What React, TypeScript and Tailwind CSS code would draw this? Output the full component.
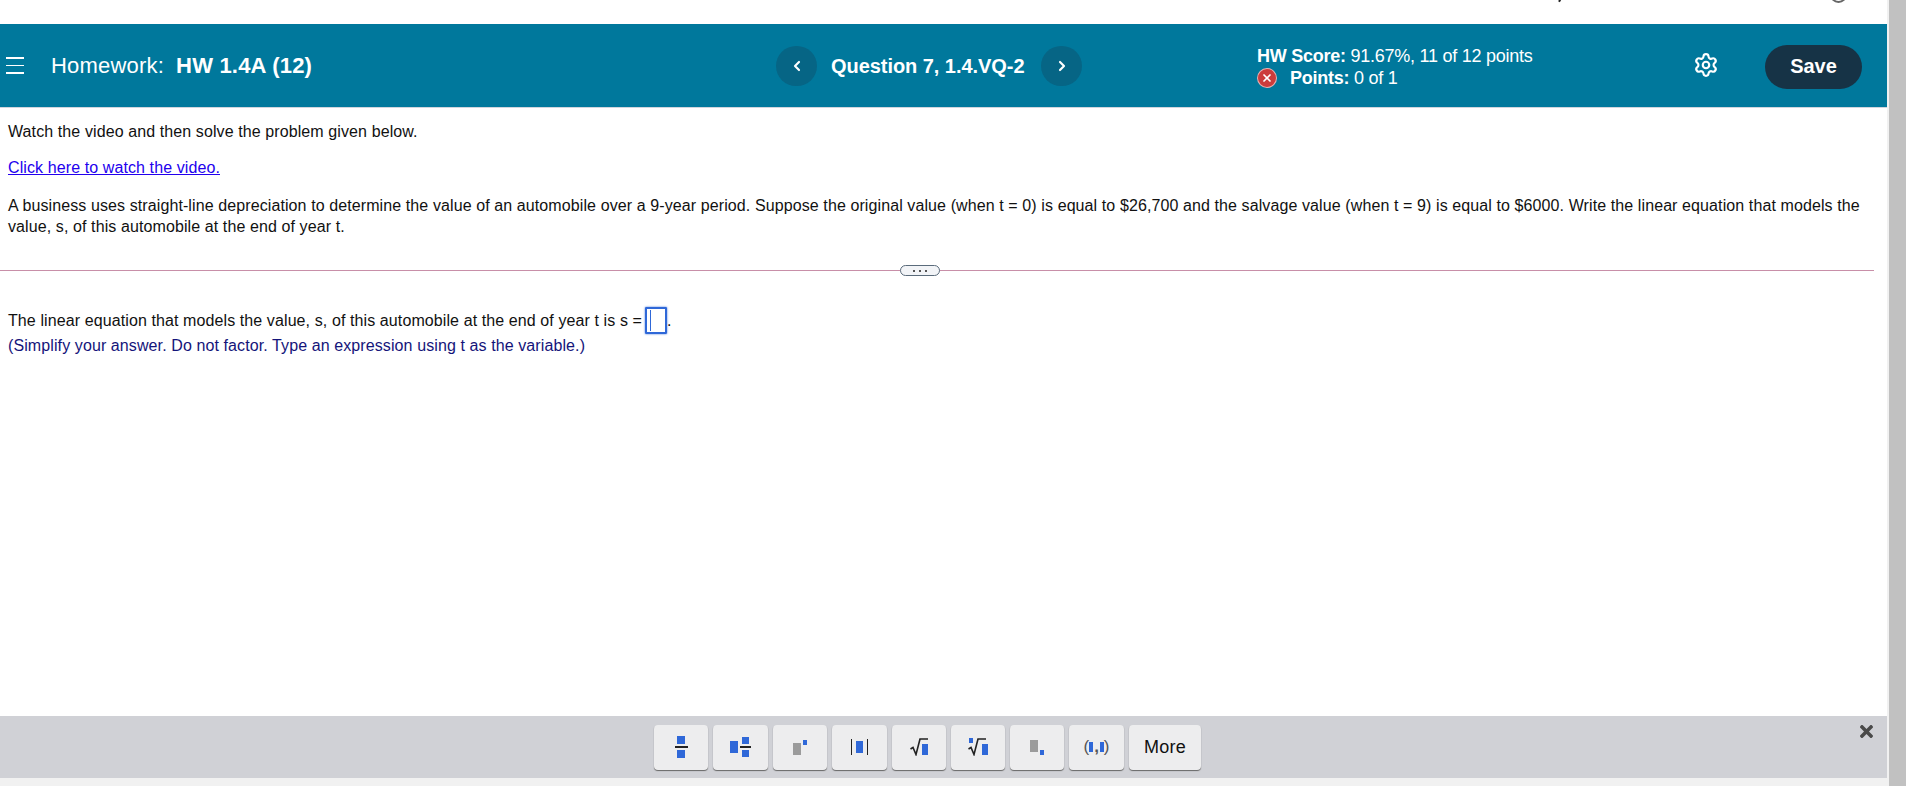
import { ChevronLeft, ChevronRight, Settings, X } from 'lucide-react'
import { FaTimes } from 'react-icons/fa'

const FONT = "font-['Liberation_Sans',Arial,sans-serif]"

const Blue = ({ className }: { className: string }) => (
  <span className={`block bg-[#2f68d8] ${className}`} />
)

const Gray = ({ className }: { className: string }) => (
  <span className={`block bg-[#9b9b9b] ${className}`} />
)

const Bar = ({ className }: { className: string }) => (
  <span className={`block bg-[#222] ${className}`} />
)

const Radical = () => (
  <svg width="18" height="18" viewBox="0 0 18 18" fill="none" stroke="#222" strokeWidth="1.6">
    <path d="M0.5 11 L3 9.5 L6 16.5 L10 1 L18 1" />
  </svg>
)

const ToolButton = ({ width, children }: { width: string; children: React.ReactNode }) => (
  <button
    className={`flex h-[45px] ${width} items-center justify-center rounded-[4px] bg-[#ededee] shadow-[0_1px_1px_#666]`}
  >
    {children}
  </button>
)

export default function App() {
  return (
    <div className={`relative h-[786px] w-[1908px] overflow-hidden bg-white ${FONT}`}>
      {/* bits of the browser chrome cut off by the top edge */}
      <span className="absolute left-[1559px] top-[-2px] h-[4px] w-[2px] rotate-[30deg] bg-[#222]" />
      <span className="absolute left-[1830px] top-[-14px] h-[17px] w-[17px] rounded-full border-2 border-[#666]" />

      <div className="flex h-full w-full">
        <div className="flex w-[1887px] flex-col">
          <div className="h-6 shrink-0" />

          <header className="flex h-[83px] shrink-0 items-center bg-[#00789c] text-white shadow-[0_1px_0_#d0d5dd]">
            <div className="flex w-[776px] items-center">
              <div className="ml-[6px] flex w-[18px] flex-col gap-[6px]">
                <span className="h-[1.5px] bg-white" />
                <span className="h-[1.5px] bg-white" />
                <span className="h-[1.5px] bg-white" />
              </div>
              <span className="ml-[27px] text-[22px] tracking-[0.2px]">Homework:</span>
              <span className="ml-[12px] text-[22px] font-bold tracking-[0.2px]">HW 1.4A (12)</span>
            </div>

            <div className="flex w-[481px] items-center">
              <button className="flex h-[40px] w-[41px] items-center justify-center rounded-full bg-[#066585]">
                <ChevronLeft size={16} strokeWidth={3.2} />
              </button>
              <span className="ml-[14px] w-[195px] whitespace-nowrap text-[20px] font-bold tracking-[-0.05px]">
                Question 7, 1.4.VQ-2
              </span>
              <button className="ml-[15px] flex h-[40px] w-[41px] items-center justify-center rounded-full bg-[#066585]">
                <ChevronRight size={16} strokeWidth={3.2} />
              </button>
            </div>

            <div className="mt-[2px] flex w-[436px] flex-col text-[18px] leading-[22px] tracking-[-0.25px]">
              <div>
                <b>HW Score:</b> 91.67%, 11 of 12 points
              </div>
              <div className="flex items-center">
                <span className="flex h-5 w-5 items-center justify-center rounded-full border border-white/60 bg-[#cc3c3c]">
                  <X size={12} strokeWidth={3.5} />
                </span>
                <span className="ml-[13px]">
                  <b>Points:</b> 0 of 1
                </span>
              </div>
            </div>

            <Settings size={26} strokeWidth={2} className="mb-[2px]" />

            <button className="ml-[46px] mt-[3px] flex h-[44px] w-[97px] items-center justify-center rounded-full bg-[#163346] pb-[2px] text-[20px] font-bold">
              Save
            </button>
          </header>

          <main className="flex-1 pt-[14px] text-[16px] tracking-[0.1px] text-[#111]">
            <p className="ml-2 leading-[22px]">Watch the video and then solve the problem given below.</p>
            <a href="#" className="ml-2 mt-[14px] block leading-[22px] text-[#2200ee] underline">
              Click here to watch the video.
            </a>
            <p className="ml-2 mr-2 mt-[16px] leading-[21px]">
              A business uses straight-line depreciation to determine the value of an automobile over a 9-year period.
              Suppose the original value (when t = 0) is equal to $26,700 and the salvage value (when t = 9) is equal to
              $6000. Write the linear equation that models the value, s, of this automobile at the end of year t.
            </p>

            <div className="relative mt-[33px] h-px w-[1874px] bg-[#c88fa8]">
              <span className="absolute left-[900px] top-[-5px] flex h-[11px] w-[40px] items-center justify-center gap-[4px] rounded-full border border-[#5a6b7b] bg-[#f2f4f7]">
                <span className="h-[2px] w-[2px] bg-[#555]" />
                <span className="h-[2px] w-[2px] bg-[#555]" />
                <span className="h-[2px] w-[2px] bg-[#555]" />
              </span>
            </div>

            <div className="ml-2 mt-[36px] flex h-[27px] items-center">
              <span>The linear equation that models the value, s, of this automobile at the end of year t is s =</span>
              <span className="ml-[3px] flex h-[27px] w-[22px] items-center rounded-[1px] border-2 border-[#2f68d8] pl-[3px] shadow-[0_0_2px_#2f68d8]">
                <span className="h-[21px] w-px bg-[#2f68d8]" />
              </span>
              <span>.</span>
            </div>
            <p className="ml-2 leading-[24px] text-[#14147a]">
              (Simplify your answer. Do not factor. Type an expression using t as the variable.)
            </p>
          </main>

          <div className="relative flex h-[62px] shrink-0 items-center bg-[#d0d1d6] pl-[654px]">
            <div className="flex gap-[5px]">
              <ToolButton width="w-[54px]">
                <span className="flex flex-col items-center gap-[2px]">
                  <Blue className="h-[8px] w-[8px]" />
                  <Bar className="h-[1.5px] w-[13px]" />
                  <Blue className="h-[8px] w-[8px]" />
                </span>
              </ToolButton>
              <ToolButton width="w-[55px]">
                <span className="flex items-center gap-[2px]">
                  <Blue className="h-[12px] w-[8px]" />
                  <span className="flex flex-col items-center gap-[2px]">
                    <Blue className="h-[7px] w-[7px]" />
                    <Bar className="h-[1.5px] w-[11px]" />
                    <Blue className="h-[7px] w-[7px]" />
                  </span>
                </span>
              </ToolButton>
              <ToolButton width="w-[54px]">
                <span className="flex items-start gap-[2px]">
                  <Gray className="mt-[3px] h-[12px] w-[8px]" />
                  <Blue className="h-[5px] w-[4px]" />
                </span>
              </ToolButton>
              <ToolButton width="w-[55px]">
                <span className="flex items-center gap-[4px]">
                  <Bar className="h-[16px] w-[1px]" />
                  <Blue className="h-[12px] w-[7px]" />
                  <Bar className="h-[16px] w-[1px]" />
                </span>
              </ToolButton>
              <ToolButton width="w-[54px]">
                <span className="flex items-end">
                  <Radical />
                  <Blue className="mb-[1px] ml-[-6px] h-[11px] w-[6px]" />
                </span>
              </ToolButton>
              <ToolButton width="w-[54px]">
                <span className="relative flex items-end">
                  <Blue className="absolute left-[1px] top-[0px] h-[5px] w-[4px]" />
                  <Radical />
                  <Blue className="mb-[1px] ml-[-4px] h-[11px] w-[6px]" />
                </span>
              </ToolButton>
              <ToolButton width="w-[54px]">
                <span className="flex items-end gap-[2px]">
                  <Gray className="mb-[3px] h-[12px] w-[8px]" />
                  <Blue className="h-[5px] w-[4px]" />
                </span>
              </ToolButton>
              <ToolButton width="w-[55px]">
                <span className="flex items-center text-[17px] text-[#555]">
                  (<Blue className="h-[10px] w-[4px]" />
                  <span className="mx-[1px] font-bold">,</span>
                  <Blue className="h-[10px] w-[4px]" />)
                </span>
              </ToolButton>
              <ToolButton width="w-[72px]">
                <span className="text-[18px] tracking-[0.2px] text-[#111]">More</span>
              </ToolButton>
            </div>
            <FaTimes size={19} className="absolute right-[11px] top-[6px] text-[#4a4a4a]" />
          </div>

          <div className="h-2 shrink-0 bg-[#f1f1f1]" />
        </div>

        <div className="w-[2px] bg-[#f1f1f1]" />
        <div className="w-[17px] bg-[#c1c1c1]" />
      </div>
    </div>
  )
}
